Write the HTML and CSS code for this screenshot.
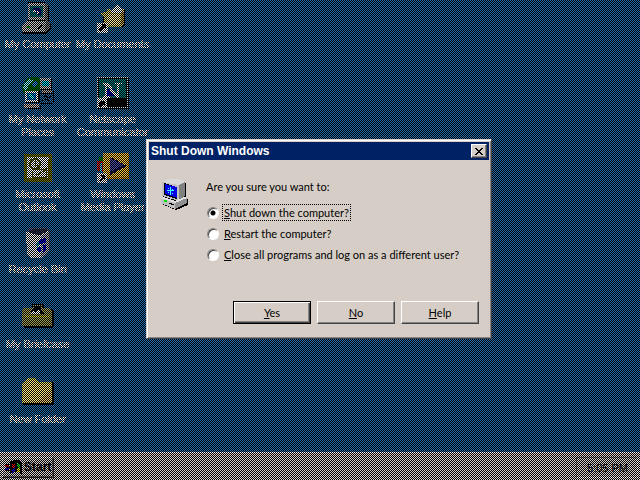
FILE: index.html
```
<!DOCTYPE html>
<html lang="en">
<head>
    <meta charset="UTF-8">
    <meta name="viewport" content="width=device-width, initial-scale=1.0">
    <title>Shut Down Windows</title>
    <link rel="stylesheet" href="styles.css">
</head>
<body>
    <div class="screen">
        <main class="desktop">
            <a class="shortcut" href="#">
                <svg width="32" height="32" viewBox="0 0 32 32" shape-rendering="crispEdges">
                    <path d="M6 0h17l4 3v17l2 2v6l-5 4H0v-8l6-6z" fill="#000"/>
                    <path d="M6 1h17v17H6z" fill="#c0c0c0"/>
                    <path d="M23 1l3 2v15l-3 2z" fill="#808080"/>
                    <path d="M8 4h13v11H8z" fill="#008080"/>
                    <path d="M11 6h5l3 3v4h-3l-4-4z" fill="#000080"/>
                    <path d="M11 8h3v1h3v3h-2v-2h-4z" fill="#fff"/>
                    <path d="M5 19h20l2 2-4 9H0v-6z" fill="#c0c0c0"/>
                    <path d="M25 19l3 3v4l-5 5v-6z" fill="#808080"/>
                    <path d="M5 24h3v2H5z" fill="#00c000"/>
                    <path d="M11 27l4-4M16 27l4-4M4 30h18" stroke="#000"/>
                </svg>
                <span>My Computer</span>
            </a>
            <a class="shortcut" href="#">
                <svg width="32" height="32" viewBox="0 0 32 32" shape-rendering="crispEdges">
                    <path d="M6 10l5-1V7l4 1 5-6 5 5h3v16l-3 2H6z" fill="#000"/>
                    <path d="M4 11l6-2V7l5 1 5-6 4 5h3v14l-4 4H8l-1-9z" fill="#d8d060"/>
                    <path d="M14 8l6-6 5 5v4H14z" fill="#fff"/>
                    <path d="M11 12h12v11H9z" fill="#ffe8a0"/>
                    <path d="M24 10h3v12h-3z" fill="#c09840"/>
                    <path d="M0 21h11v10H0z" fill="#fff"/>
                    <path d="M2 29v-3l3-3-2-1h6v6l-2-2-3 3z" fill="#000"/>
                </svg>
                <span>My Documents</span>
            </a>
            <a class="shortcut" href="#">
                <svg width="32" height="32" viewBox="0 0 32 32" shape-rendering="crispEdges">
                    <path d="M5 2l5-2h6l3 4v9l-8 4H2l-2-7z" fill="#008000"/>
                    <path d="M2 6l5-4 4 1-4 5-2 5-4-1z" fill="#80ffff"/>
                    <path d="M9 8l5-4 2 3-4 4z" fill="#3090e0"/>
                    <path d="M18 2h12v11H18z" fill="#000"/>
                    <path d="M18 1h11v11H18z" fill="#c0c0c0"/>
                    <path d="M20 4h7v5h-7z" fill="#00e0ff"/>
                    <path d="M20 13h10v3H20z" fill="#b0a8a0"/>
                    <path d="M19 16h12M31 14v12M19 26h12M21 20l3-2 2 3 3-2M20 24l4-2 3 2" stroke="#000" fill="none"/>
                    <path d="M3 14h15v12H3z" fill="#000"/>
                    <path d="M3 14h13v11H3z" fill="#fff"/>
                    <path d="M5 16h9v7H5z" fill="#0080e0"/>
                    <path d="M7 18l2-1 3 3-2 2z" fill="#40ffff"/>
                    <path d="M2 27h15v4H2z" fill="#c8b8b0"/>
                    <path d="M5 31h13v-3" stroke="#000" fill="none"/>
                </svg>
                <span>My Network Places</span>
            </a>
            <a class="shortcut" href="#">
                <svg width="32" height="32" viewBox="0 0 32 32" shape-rendering="crispEdges">
                    <path d="M1 1h31v31H1z" fill="#000"/>
                    <path d="M0 0h31v31H0z" fill="#d0d0d0"/>
                    <path d="M1 1h29v29H1z" fill="#000"/>
                    <path d="M2 2h27v19H2z" fill="#008080"/>
                    <path d="M9 12h8v7H9z" fill="#0000c0"/>
                    <path d="M6 6h5l9 11V7h-3V6h8v1h-3v14h-3L10 9v10h3v2H6v-2h2V8H6z" fill="#fff"/>
                    <path d="M0 21h10v10H0z" fill="#fff"/>
                    <path d="M2 30v-4l2-2h4v6l-2-3-2 3z" fill="#000"/>
                </svg>
                <span>Netscape Communicator</span>
            </a>
            <a class="shortcut" href="#">
                <svg width="32" height="32" viewBox="0 0 32 32" shape-rendering="crispEdges">
                    <path d="M2 2h28v28H2z" fill="#808000"/>
                    <path d="M5 5h22v22H5z" fill="#fff"/>
                    <path d="M6 26h20V7" stroke="#808000" fill="none"/>
                    <circle cx="13" cy="12" r="5" fill="none" stroke="#606000" stroke-width="2"/>
                    <path d="M13 8v5h3M12 18l12-1v8H10v-5l5 3 8-5" fill="none" stroke="#606000"/>
                </svg>
                <span>Microsoft Outlook</span>
            </a>
            <a class="shortcut" href="#">
                <svg width="32" height="32" viewBox="0 0 32 32" shape-rendering="crispEdges">
                    <path d="M7 2h25v25H7z" fill="#e8a010"/>
                    <path d="M6 1h25v24H6z" fill="#ffc840"/>
                    <path d="M0 9h6v10H0z" fill="#e02010"/>
                    <path d="M2 5h4v4H2z" fill="#00a000"/>
                    <path d="M3 11h2v9H3z" fill="#40c0ff"/>
                    <path d="M13 5l17 9-17 9z" fill="#101040"/>
                    <path d="M13 6l14 7-14 7z" fill="#4848a0"/>
                    <path d="M0 21h10v10H0z" fill="#fff"/>
                    <path d="M2 29l3-4-2-2h5v6l-2-2-2 3z" fill="#000"/>
                </svg>
                <span>Windows Media Player</span>
            </a>
            <a class="shortcut" href="#">
                <svg width="32" height="32" viewBox="0 0 32 32" shape-rendering="crispEdges">
                    <path d="M4 4l5-3h15l4 3v20l-8 7H9l-4-3z" fill="#606080"/>
                    <path d="M4 6l14 3 9-5v20l-8 7H9l-4-3z" fill="#e8e8e8"/>
                    <path d="M5 5l6-3h14l1 2-8 4z" fill="#303050"/>
                    <path d="M19 9l8-4v19l-8 7z" fill="#b0b0c0"/>
                    <path d="M4 5l13 4 10-5" fill="none" stroke="#fff"/>
                    <path d="M17 13l7-2v5h-3l-4 2zM21 18l3-1v7l-3 2zM15 21l4-1v5l-4-1z" fill="#0000e0"/>
                    <path d="M14 16l3-3v5l-2 4z" fill="#20b0d0"/>
                </svg>
                <span>Recycle Bin</span>
            </a>
            <a class="shortcut" href="#">
                <svg width="32" height="32" viewBox="0 0 32 32" shape-rendering="crispEdges">
                    <path d="M2 7h28l2 3v14l-2 2H2z" fill="#000"/>
                    <path d="M11 7V3h9v4" fill="none" stroke="#000" stroke-width="3"/>
                    <path d="M11 6V3h8v3" fill="none" stroke="#a0a060"/>
                    <path d="M1 6h27l2 3v15H0V7z" fill="#a0a050"/>
                    <path d="M8 12l4-7h6l4 7z" fill="#000"/>
                    <path d="M9 12l2-4 3 3 3-4 2 5z" fill="#fff"/>
                    <path d="M3 14h25" stroke="#e0e000"/>
                </svg>
                <span>My Briefcase</span>
            </a>
            <a class="shortcut" href="#">
                <svg width="32" height="32" viewBox="0 0 32 32" shape-rendering="crispEdges">
                    <path d="M1 6l4-5h8l3 4h15l1 1v22H1z" fill="#000"/>
                    <path d="M0 6l5-5h8l3 4h14v21H0z" fill="#e0d850"/>
                    <path d="M1 7l4-4h7l4 4h13v18H1z" fill="#ffe880"/>
                    <path d="M16 25l13-14v14z" fill="#f0c878"/>
                </svg>
                <span>New Folder</span>
            </a>
        </main>
        <footer class="taskbar">
            <button class="start" type="button">
                <svg width="17" height="16" viewBox="0 0 17 16" shape-rendering="crispEdges">
                    <path d="M5 2l4-2h4l4 2v12l-4-2H9l-4 2zM0 4h5v1H0zM1 7h4v1H1zM0 10h5v1H0z" fill="#000"/>
                    <path d="M7 4l3-1v4l-3 1zM0 5h4v2H0z" fill="#f00"/>
                    <path d="M12 3l3 1v4l-3-1z" fill="#0f0"/>
                    <path d="M7 9l3-1v4l-3 1zM0 8h4v2H0z" fill="#00f"/>
                    <path d="M12 8l3 1v4l-3-1z" fill="#ff0"/>
                </svg>
                Start
            </button>
            <div class="tray">5:05 PM</div>
        </footer>
    </div>

    <div class="overlay">
        <form class="dialog" role="dialog" aria-labelledby="dialogTitle">
            <div class="titlebar">
                <h1 id="dialogTitle">Shut Down Windows</h1>
                <button class="close" type="button" aria-label="Close">
                    <svg width="8" height="7" viewBox="0 0 8 7" shape-rendering="crispEdges">
                        <path d="M0 0h2v1h1v1h2V1h1V0h2v1H7v1H6v1H5v1h1v1h1v1h1v1H6V6H5V5H3v1H2v1H0V6h1V5h1V4h1V3H2V2H1V1H0z" fill="#000"/>
                    </svg>
                </button>
            </div>
            <div class="content">
                <svg width="32" height="32" viewBox="0 0 32 32" shape-rendering="crispEdges">
                    <path d="M3 4l5-3h11l7 4v15l2 2v5L16 32 2 26v-5l1-2z" fill="#000"/>
                    <path d="M3 4l5-3h11l6 3-6 4z" fill="#d8d8d8"/>
                    <path d="M2 4l17 3v16L2 18z" fill="#c0c0c0"/>
                    <path d="M19 7l6-3v14l-6 5z" fill="#808080"/>
                    <path d="M4 5l13 4v12L4 17z" fill="#000"/>
                    <path d="M5 6l12 3v11L5 16z" fill="#0000e0"/>
                    <path d="M10 9h1v8h-1zM7 12h7v1H7zM8 10h1v1H8zM12 11h1v1h-1zM8 14h1v1H8zM12 15h1v1h-1z" fill="#40ffff"/>
                    <path d="M1 20l14 5v6L1 25z" fill="#c0c0c0"/>
                    <path d="M15 25l12-5v5l-12 6z" fill="#909090"/>
                    <path d="M1 20l2-1 12 4 9-4 3 1-12 5z" fill="#e0e0e0"/>
                    <path d="M4 22h3v2H4z" fill="#00e000"/>
                    <path d="M9 25l5 2" stroke="#000"/>
                </svg>
                <fieldset class="options">
                    <legend>Are you sure you want to:</legend>
                    <div class="option">
                        <input type="radio" name="action" id="shutdown" checked>
                        <label class="focused" for="shutdown"><u>S</u>hut down the computer?</label>
                    </div>
                    <div class="option">
                        <input type="radio" name="action" id="restart">
                        <label for="restart"><u>R</u>estart the computer?</label>
                    </div>
                    <div class="option">
                        <input type="radio" name="action" id="logoff">
                        <label for="logoff"><u>C</u>lose all programs and log on as a different user?</label>
                    </div>
                </fieldset>
            </div>
            <div class="buttons">
                <button class="default" type="submit"><span><u>Y</u>es</span></button>
                <button type="button"><span><u>N</u>o</span></button>
                <button type="button"><span><u>H</u>elp</span></button>
            </div>
        </form>
    </div>
</body>
</html>
```
FILE: styles.css
```
* {
    box-sizing: border-box;
}

body {
    margin: 0;
    font-family: "Liberation Sans", Arial, sans-serif;
    font-size: 11px;
    line-height: 13px;
    color: #000;
}

button {
    font: inherit;
    color: inherit;
    padding: 0;
}

svg {
    display: block;
    flex: none;
}

.screen {
    min-height: 100vh;
    display: flex;
    flex-direction: column;
    background: #226eac;
}

/* desktop icons in 75px cells */
.desktop {
    flex: 1;
    display: grid;
    grid-auto-flow: column;
    grid-template-rows: repeat(6, 75px);
    grid-auto-columns: 75px;
    height: 0;
}

.shortcut:nth-child(1) { grid-area: 1 / 1; }
.shortcut:nth-child(2) { grid-area: 1 / 2; }
.shortcut:nth-child(3) { grid-area: 2 / 1; }
.shortcut:nth-child(4) { grid-area: 2 / 2; }
.shortcut:nth-child(5) { grid-area: 3 / 1; }
.shortcut:nth-child(6) { grid-area: 3 / 2; }

.shortcut {
    display: flex;
    flex-direction: column;
    align-items: center;
    gap: 4px;
    padding-top: 2px;
    color: #fff;
    text-align: center;
    text-decoration: none;
    text-shadow: 0 0 #fff, 0 0 #fff;
}

.taskbar {
    display: flex;
    justify-content: space-between;
    padding: 4px 2px 2px;
    height: 28px;
    background: #d6cec6;
    border-top: 1px solid #fff;
}

.start {
    display: flex;
    align-items: center;
    gap: 2px;
    padding: 0 2px;
    font-weight: bold;
    font-size: 12px;
    background: #d6cec6;
    border: 1px solid;
    border-color: #fff #404040 #404040 #fff;
    box-shadow: inset -1px -1px #848484;
}

.tray {
    padding: 4px 9px 0 10px;
    border: 1px solid;
    border-color: #848484 #fff #fff #848484;
}

/* black dither over everything behind the dialog */
.overlay {
    position: fixed;
    inset: 0;
    display: flex;
    align-items: center;
    justify-content: center;
    padding: 0 2px 2px 0;
    background: repeating-conic-gradient(#000 0 25%, transparent 0 50%) 0 0 / 2px 2px;
}

.dialog {
    min-width: 346px;
    padding: 1px;
    font-family: Lato, "Liberation Sans", sans-serif;
    background: #d6cec6;
    border: 1px solid;
    border-color: #d6cec6 #424242 #424242 #d6cec6;
    box-shadow: inset 1px 1px #fff, inset -1px -1px #848484;
}

.titlebar {
    display: flex;
    align-items: center;
    justify-content: space-between;
    margin: 1px;
    padding: 0 2px;
    height: 18px;
    background: #002163;
}

.titlebar h1 {
    margin: 0;
    font-family: "Liberation Sans", Arial, sans-serif;
    font-size: 12px;
    color: #fff;
}

.close,
.buttons button {
    display: flex;
    align-items: center;
    justify-content: center;
    background: #d6cec6;
    border: 1px solid;
    border-color: #fff #424242 #424242 #fff;
    box-shadow: inset -1px -1px #848484;
}

.close {
    width: 16px;
    height: 14px;
}

.content {
    display: flex;
    gap: 14px;
    padding: 17px 11px 0 12px;
}

.options {
    display: flex;
    flex-direction: column;
    gap: 6px;
    margin: 0;
    padding: 12px 0 0;
    border: 0;
}

.options legend {
    padding: 2px 0 0;
}

.option {
    display: flex;
    align-items: center;
    gap: 4px;
}

.option input {
    appearance: none;
    margin: 0 0 0 1px;
    width: 12px;
    height: 12px;
    border: 1px solid;
    border-color: #848484 #fff #fff #848484;
    border-radius: 50%;
    background: #fff;
    box-shadow: inset 1px 1px #424242;
}

.option input:checked {
    background: radial-gradient(#000 2px, #fff 3px);
}

.option label {
    padding: 1px;
}

.option .focused {
    outline: 1px dotted #000;
}

.buttons {
    display: flex;
    justify-content: flex-end;
    gap: 6px;
    padding: 39px 11px 13px;
}

.buttons button {
    width: 78px;
    height: 23px;
}

.buttons .default {
    border-color: #000;
    box-shadow: inset 1px 1px #fff, inset -1px -1px #424242, inset -2px -2px #848484;
}
```
